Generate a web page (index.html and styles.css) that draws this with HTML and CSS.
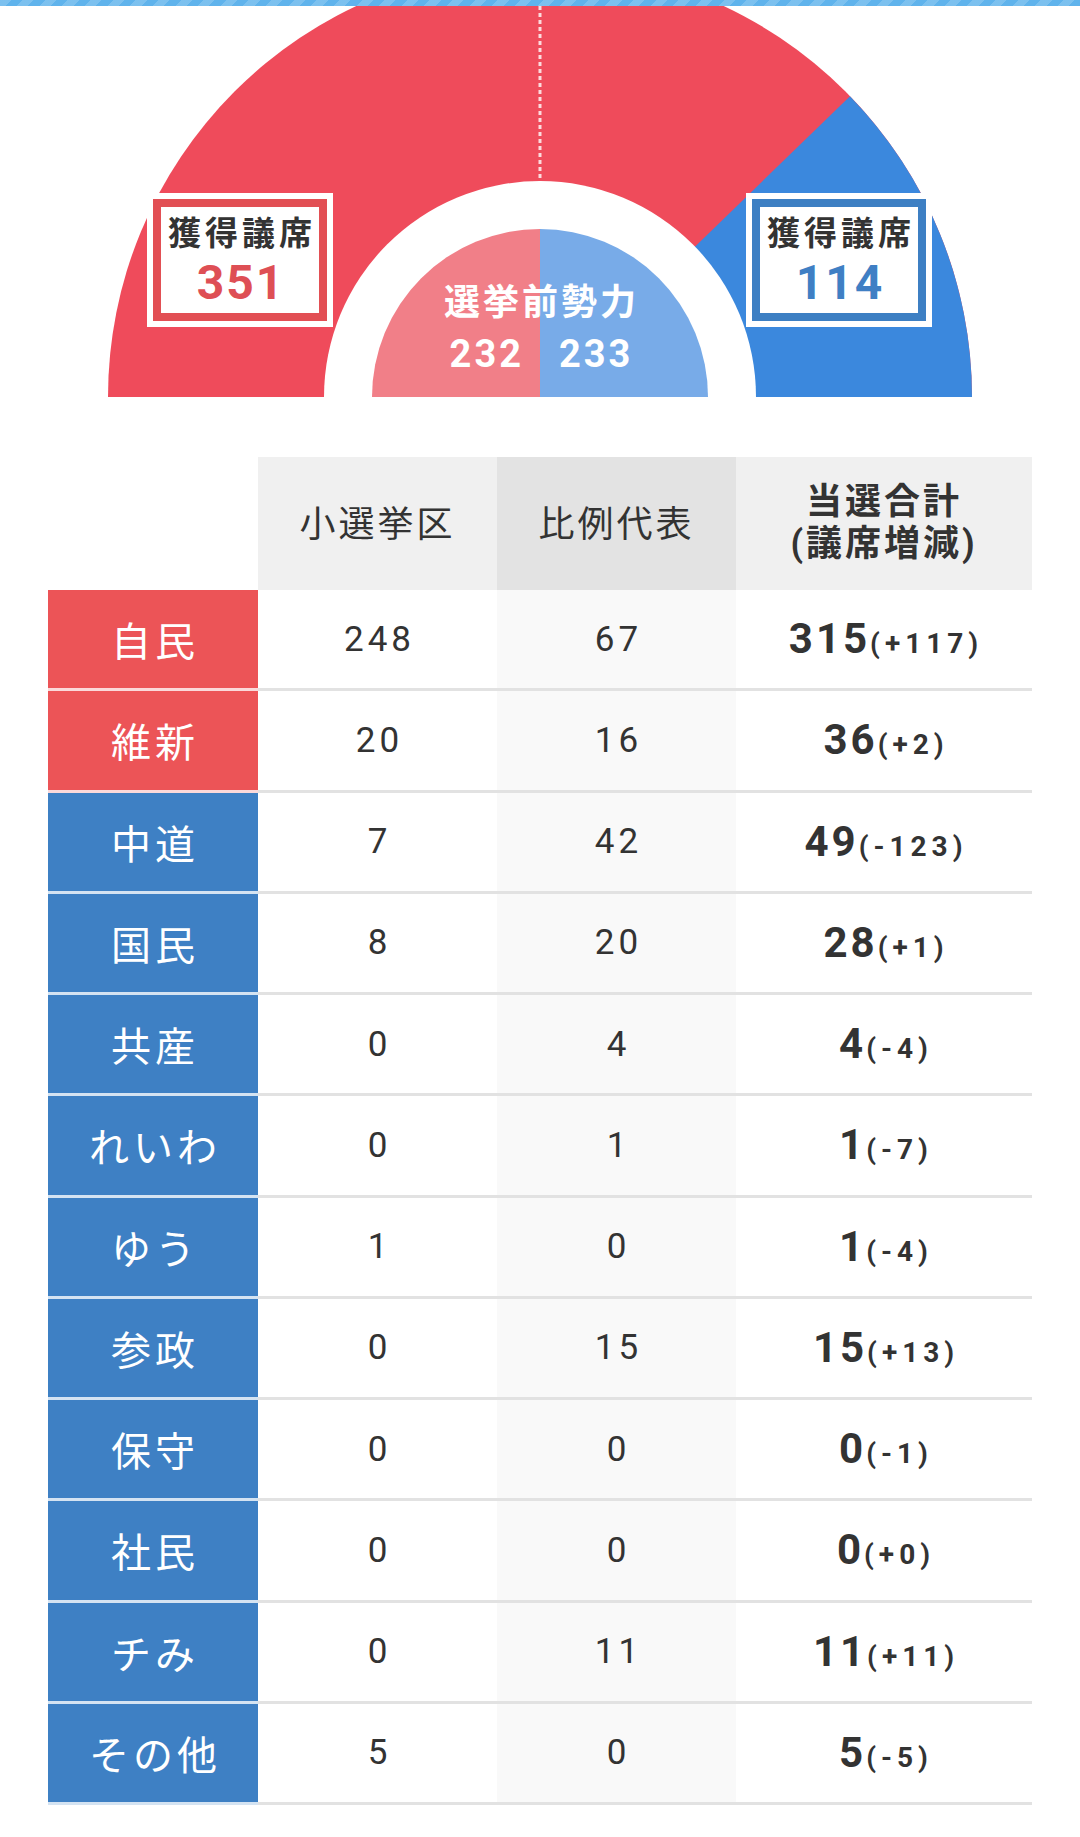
FILE: index.html
```html
<!DOCTYPE html>
<html lang="ja">
<head>
<meta charset="utf-8">
<title>衆院選 獲得議席</title>
<link rel="stylesheet" href="styles.css">
</head>
<body>
<div class="strip"></div>
<div class="chart">
  <svg class="chart__svg" width="1080" height="394" viewBox="0 6 1080 394" xmlns="http://www.w3.org/2000/svg">
    <path d="M108,397 A432,432 0 0 1 972,397 Z" fill="#ef4b5b"/>
    <path d="M540,397 L850,96.2 A432,432 0 0 1 972,397 Z" fill="#3b88dd"/>
    <line x1="540" y1="6" x2="540" y2="183" stroke="#ffffff" stroke-opacity="0.8" stroke-width="3" stroke-dasharray="4 3"/>
    <path d="M324,397 A216,216 0 0 1 756,397 Z" fill="#ffffff"/>
    <path d="M372,397 A168,168 0 0 1 540,229 L540,397 Z" fill="#f17f88"/>
    <path d="M540,229 A168,168 0 0 1 708,397 L540,397 Z" fill="#78abe8"/>
  </svg>
  <div class="seat seat--ruling">
    <div class="seat__inner">
      <div class="seat__title">獲得議席</div>
      <div class="seat__num">351</div>
    </div>
  </div>
  <div class="seat seat--opposition">
    <div class="seat__inner">
      <div class="seat__title">獲得議席</div>
      <div class="seat__num">114</div>
    </div>
  </div>
  <div class="before">
    <div class="before__title">選挙前勢力</div>
    <div class="before__nums"><span>232</span><span>233</span></div>
  </div>
</div>

<div class="results">
  <div class="head head--blank"></div>
  <div class="head head--smd">小選挙区</div>
  <div class="head head--pr">比例代表</div>
  <div class="head head--total">当選合計<br>(議席増減)</div>

  <div class="party party--red">自民</div><div class="cell">248</div><div class="cell cell--pr">67</div><div class="cell cell--total"><b>315</b><small>(+117)</small></div>
  <div class="party party--red">維新</div><div class="cell">20</div><div class="cell cell--pr">16</div><div class="cell cell--total"><b>36</b><small>(+2)</small></div>
  <div class="party party--blue">中道</div><div class="cell">7</div><div class="cell cell--pr">42</div><div class="cell cell--total"><b>49</b><small>(-123)</small></div>
  <div class="party party--blue">国民</div><div class="cell">8</div><div class="cell cell--pr">20</div><div class="cell cell--total"><b>28</b><small>(+1)</small></div>
  <div class="party party--blue">共産</div><div class="cell">0</div><div class="cell cell--pr">4</div><div class="cell cell--total"><b>4</b><small>(-4)</small></div>
  <div class="party party--blue">れいわ</div><div class="cell">0</div><div class="cell cell--pr">1</div><div class="cell cell--total"><b>1</b><small>(-7)</small></div>
  <div class="party party--blue">ゆう</div><div class="cell">1</div><div class="cell cell--pr">0</div><div class="cell cell--total"><b>1</b><small>(-4)</small></div>
  <div class="party party--blue">参政</div><div class="cell">0</div><div class="cell cell--pr">15</div><div class="cell cell--total"><b>15</b><small>(+13)</small></div>
  <div class="party party--blue">保守</div><div class="cell">0</div><div class="cell cell--pr">0</div><div class="cell cell--total"><b>0</b><small>(-1)</small></div>
  <div class="party party--blue">社民</div><div class="cell">0</div><div class="cell cell--pr">0</div><div class="cell cell--total"><b>0</b><small>(+0)</small></div>
  <div class="party party--blue">チみ</div><div class="cell">0</div><div class="cell cell--pr">11</div><div class="cell cell--total"><b>11</b><small>(+11)</small></div>
  <div class="party party--blue">その他</div><div class="cell">5</div><div class="cell cell--pr">0</div><div class="cell cell--total"><b>5</b><small>(-5)</small></div>
</div>
</body>
</html>
```

FILE: styles.css
```css
html, body {
  margin: 0;
  padding: 0;
  background: #ffffff;
}

body {
  font-family: Roboto, "Noto Sans CJK JP", sans-serif;
  color: #333333;
}

.strip {
  height: 6px;
  background-color: #5fb3ec;
  background-image: repeating-linear-gradient(135deg, rgba(255,255,255,0.18) 0 8px, rgba(0,0,0,0) 8px 16px);
}

.chart {
  position: relative;
  height: 394px;
}

.chart__svg {
  display: block;
}

/* seat labels overlaid on the chart */
.seat {
  position: absolute;
  top: 187px;
  width: 186px;
  box-sizing: border-box;
  padding: 6px;
  background: #ffffff;
}

.seat--ruling {
  left: 147px;
}

.seat--opposition {
  left: 746px;
}

.seat__inner {
  height: 106px;
  border: 8px solid #e24f54;
  background: #ffffff;
  text-align: center;
}

.seat--opposition .seat__inner {
  border-color: #3d7fc3;
}

.seat__title {
  margin-top: 5px;
  padding-left: 4px;
  font-size: 33px;
  line-height: 44px;
  font-weight: 700;
  letter-spacing: 4px;
  color: #333333;
}

.seat__num {
  margin-top: 3px;
  padding-left: 2px;
  font-size: 48px;
  line-height: 48px;
  font-weight: 700;
  letter-spacing: 2px;
  color: #de4f55;
}

.seat--opposition .seat__num {
  color: #3f7fc4;
}

.before {
  position: absolute;
  left: 0;
  right: 0;
  top: 275px;
  text-align: center;
  color: #ffffff;
  font-weight: 700;
}

.before__title {
  padding-left: 3px;
  font-size: 36px;
  line-height: 44px;
  letter-spacing: 3px;
}

.before__nums {
  margin-top: 7px;
  display: flex;
  justify-content: center;
  gap: 35px;
  padding-left: 3px;
  font-size: 38px;
  line-height: 44px;
  letter-spacing: 3px;
}

/* results table */
.results {
  display: grid;
  grid-template-columns: 210px 239px 239px 296px;
  width: 984px;
  margin: 57px 0 0 48px;
}

.head {
  height: 133px;
  box-sizing: border-box;
  display: flex;
  align-items: center;
  justify-content: center;
  text-align: center;
  font-size: 36px;
  letter-spacing: 3px;
  color: #333333;
}

.head--blank {
  background: transparent;
}

.head--smd {
  background: #f0f0f0;
  padding-bottom: 6px;
}

.head--pr {
  background: #e3e3e3;
  padding-bottom: 6px;
}

.head--total {
  background: #f0f0f0;
  font-weight: 700;
  line-height: 42px;
  padding-bottom: 2px;
}

.party {
  height: 98.25px;
  border-bottom: 3px solid rgba(255, 255, 255, 0.78);
  display: flex;
  align-items: center;
  justify-content: center;
  color: #ffffff;
  font-size: 40px;
  letter-spacing: 4px;
  padding-left: 4px;
}

.party--red {
  background: #ec5457;
}

.party--blue {
  background: #3e80c4;
}

.cell {
  height: 98.25px;
  border-bottom: 3px solid #e2e2e2;
  display: flex;
  align-items: center;
  justify-content: center;
  font-size: 35px;
  letter-spacing: 4px;
  padding-left: 4px;
  color: #333333;
  background: #ffffff;
}

.cell--pr {
  background: #f9f9f9;
}

.cell--total {
  align-items: baseline;
  line-height: 98px;
}

.cell--total b {
  font-size: 42px;
  font-weight: 700;
  letter-spacing: 3px;
}

.cell--total small {
  font-size: 28px;
  font-weight: 700;
  letter-spacing: 5px;
}
```
